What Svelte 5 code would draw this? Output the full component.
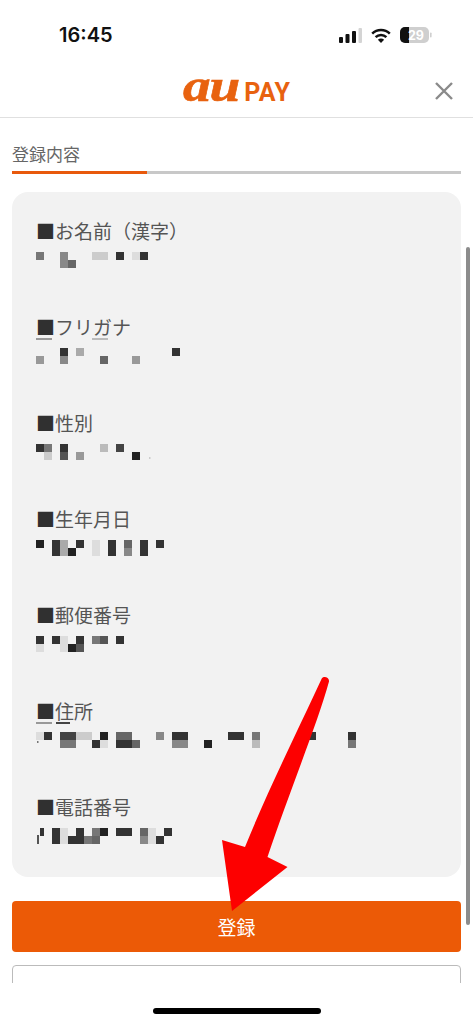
<script>
  // each block: [column, row, shade] on the 8px mosaic grid
  // each smudge: [x, width, shade, y, height], for what the mosaic leaves at its edges
  const fields = [
    { label: 'お名前（漢字）', blocks: [[0,0,'#777'],[3,0,'#888'],[3,1,'#888'],[4,1,'#666'],[7,0,'#ccc'],[8,0,'#ccc'],[10,0,'#333'],[12,0,'#ddd'],[13,0,'#333']] },
    { label: 'フリガナ', smudges: [[0,16,'#999',-10,2],[56,16,'#bbb',-10,2]], blocks: [[3,0,'#333'],[5,0,'#aaa'],[17,0,'#333'],[0,1,'#999'],[3,1,'#888'],[8,1,'#666'],[12,1,'#999']] },
    { label: '性別', smudges: [[113,1.5,'#ccc',13,2]], blocks: [[0,0,'#333'],[1,0,'#777'],[3,0,'#333'],[8,0,'#bbb'],[10,0,'#444'],[1,1,'#ccc'],[3,1,'#555'],[5,1,'#999'],[12,1,'#222']] },
    { label: '生年月日', blocks: [[0,0,'#222'],[2,0,'#333'],[3,0,'#aaa'],[5,0,'#333'],[7,0,'#ddd'],[9,0,'#333'],[11,0,'#666'],[13,0,'#333'],[15,0,'#333'],[2,1,'#333'],[3,1,'#aaa'],[4,1,'#222'],[7,1,'#ddd'],[9,1,'#333'],[11,1,'#888'],[13,1,'#333']] },
    { label: '郵便番号', blocks: [[0,0,'#333'],[2,0,'#333'],[3,0,'#ddd'],[5,0,'#333'],[7,0,'#777'],[8,0,'#555'],[10,0,'#333'],[0,1,'#ddd'],[3,1,'#ddd'],[4,1,'#222'],[5,1,'#555']] },
    { label: '住所', smudges: [[0,16,'#999',-10,2],[20,14,'#444',-10,2],[1,1.5,'#777',9,2]], blocks: [[0,0,'#ddd'],[1,0,'#333'],[3,0,'#444'],[4,0,'#444'],[5,0,'#ccc'],[6,0,'#ccc'],[8,0,'#222'],[10,0,'#666'],[11,0,'#666'],[15,0,'#888'],[17,0,'#333'],[18,0,'#333'],[24,0,'#333'],[25,0,'#333'],[27,0,'#777'],[34,0,'#333'],[39,0,'#333'],[3,1,'#777'],[4,1,'#777'],[7,1,'#333'],[8,1,'#ddd'],[10,1,'#333'],[11,1,'#333'],[12,1,'#666'],[17,1,'#888'],[18,1,'#888'],[21,1,'#222'],[27,1,'#bbb'],[39,1,'#777']] },
    { label: '電話番号', smudges: [[4,4,'#333',0,8],[1,2,'#555',7,9]], blocks: [[2,0,'#333'],[3,0,'#ddd'],[5,0,'#333'],[7,0,'#777'],[8,0,'#222'],[10,0,'#333'],[11,0,'#333'],[13,0,'#666'],[14,0,'#ddd'],[16,0,'#333'],[2,1,'#333'],[3,1,'#ddd'],[4,1,'#333'],[5,1,'#333'],[6,1,'#777'],[7,1,'#666'],[13,1,'#888'],[14,1,'#ddd'],[15,1,'#333']] },
  ];
</script>

<div class="screen">
  <div class="status">
    <span class="status__time">16:45</span>
    <div class="status__icons">
      <svg width="23" height="15" viewBox="0 0 23 15" aria-hidden="true">
        <rect x="0" y="9" width="4" height="6" rx="1" fill="#111" />
        <rect x="6.500" y="6" width="4" height="9" rx="1" fill="#111" />
        <rect x="13" y="3" width="4" height="12" rx="1" fill="#111" />
        <rect x="19.500" y="0" width="3.500" height="15" rx="1" fill="#d4d4d4" />
      </svg>
      <svg width="20" height="15" viewBox="0 0 20 15" aria-hidden="true">
        <path d="M1.200 5.600a12.600 12.600 0 0 1 17.600 0M4.600 9.100a7.800 7.800 0 0 1 10.800 0" fill="none" stroke="#111" stroke-width="2.500" />
        <path d="M10 15 6.900 11.800a4.400 4.400 0 0 1 6.200 0z" fill="#111" />
      </svg>
      <svg width="32" height="16" viewBox="0 0 32 16" aria-hidden="true">
        <rect x="0" y="0" width="29" height="16" rx="5" fill="#cfcfcf" />
        <path d="M5 0h4v16H5a5 5 0 0 1-5-5V5a5 5 0 0 1 5-5z" fill="#111" />
        <rect x="30" y="5.500" width="1.600" height="5" rx="0.800" fill="#cfcfcf" />
        <text class="status__level" x="16" y="12.600" text-anchor="middle">29</text>
      </svg>
    </div>
  </div>

  <header class="header">
    <div class="logo">
      <span class="logo__au">au</span>
      <span class="logo__pay">PAY</span>
    </div>
    <svg class="header__close" width="18" height="18" viewBox="0 0 18 18" aria-hidden="true">
      <path d="M1 1l16 16M17 1 1 17" stroke="#8a8a8a" stroke-width="2.400" fill="none" />
    </svg>
  </header>

  <main class="main">
    <div class="steps">
      <div class="steps__title">登録内容</div>
      <div class="steps__track"><div class="steps__fill"></div></div>
    </div>

    <section class="card">
      {#each fields as field}
        <div class="field">
          <div class="field__label"><span class="field__mark">■</span>{field.label}</div>
          <svg class="field__value" width="340" height="16" aria-hidden="true">
            {#each field.smudges ?? [] as s}
              <rect x={s[0]} y={s[3]} width={s[1]} height={s[4]} fill={s[2]} />
            {/each}
            {#each field.blocks as b}
              <rect x={b[0] * 8} y={b[1] * 8} width="8" height="8" fill={b[2]} />
            {/each}
          </svg>
        </div>
      {/each}
    </section>

    <button class="btn btn--primary">登録</button>
    <button class="btn btn--outline"></button>
  </main>

  <div class="home"><div class="home__bar"></div></div>

  <div class="scrollbar"></div>

  <svg class="arrow" width="120" height="245" viewBox="215 670 120 245" aria-hidden="true">
    <path d="M321.500 679c1.500-3.500 8-2 7.500 2.500C317 725 290 790 267.500 857L287.500 867 232 911 222 840 245 847C268 790 298 730 321.500 679z" fill="#fd0000" />
  </svg>
</div>

<style>
  :global(body) {
    margin: 0;
    background: #fff;
    font-family: "Noto Sans CJK JP", "Noto Sans", sans-serif;
  }

  .screen {
    position: relative;
    display: flex;
    flex-direction: column;
    width: 473px;
    height: 1024px;
    overflow: hidden;
    background: #fff;
  }

  .status {
    display: flex;
    align-items: center;
    justify-content: space-between;
    height: 70px;
    padding: 0 41px 0 59px;
    box-sizing: border-box;
  }

  .status__time {
    font-family: Inter, sans-serif;
    font-size: 20px;
    font-weight: 600;
    color: #111;
  }

  .status__icons {
    display: flex;
    align-items: center;
    gap: 9px;
  }

  .status__level {
    font-family: Inter, sans-serif;
    font-size: 12.500px;
    font-weight: 700;
    fill: #fff;
  }

  .header {
    position: relative;
    display: flex;
    align-items: center;
    justify-content: center;
    height: 48px;
    box-sizing: border-box;
    border-bottom: 1px solid #e0e0e0;
  }

  .header__close {
    position: absolute;
    right: 20px;
    top: 12px;
  }

  .logo {
    display: flex;
    align-items: baseline;
    gap: 6px;
    margin-top: -9px;
    color: #e8620f;
  }

  .logo__au {
    font-family: "Liberation Serif", serif;
    font-size: 46px;
    font-style: italic;
    font-weight: 700;
    line-height: 40px;
    letter-spacing: -1px;
    -webkit-text-stroke: 0.6px #e8620f;
    transform: scaleX(1.2);
    transform-origin: left;
    margin-right: 9px;
  }

  .logo__pay {
    font-family: Roboto, sans-serif;
    font-size: 25px;
    font-weight: 700;
    line-height: 40px;
    letter-spacing: 0.5px;
  }

  .main {
    flex: 1;
    min-height: 0;
    padding: 0 12px;
    overflow: hidden;
  }

  .steps {
    padding-top: 24px;
  }

  .steps__title {
    font-size: 17px;
    line-height: 24px;
    color: #666;
  }

  .steps__track {
    height: 3px;
    margin-top: 5px;
    background: #c8c8c8;
  }

  .steps__fill {
    width: 135px;
    height: 100%;
    background: #e8590c;
  }

  .card {
    display: flex;
    flex-direction: column;
    gap: 47px;
    height: 685px;
    margin-top: 18px;
    padding: 27px 24px 0;
    box-sizing: border-box;
    border-radius: 16px;
    background: #f2f2f2;
  }

  .field__label {
    font-size: 19px;
    line-height: 24px;
    color: #555;
  }

  .field__mark {
    color: #303030;
  }

  .field__value {
    display: block;
    margin-top: 9px;
    overflow: visible;
    filter: blur(0.4px);
  }

  .btn {
    display: block;
    width: 100%;
    border-radius: 4px;
    box-sizing: border-box;
    font: inherit;
  }

  .btn--primary {
    height: 51px;
    margin-top: 24px;
    border: 0;
    background: #ec5a06;
    color: #fff;
    font-size: 19px;
  }

  .btn--outline {
    height: 51px;
    margin-top: 13px;
    border: 1.500px solid #bbb;
    background: #fff;
  }

  .home {
    height: 41px;
    padding-top: 25px;
    box-sizing: border-box;
  }

  .home__bar {
    width: 168px;
    height: 6px;
    margin: 0 auto;
    border-radius: 3px;
    background: #000;
  }

  .scrollbar {
    position: absolute;
    left: 466px;
    top: 247px;
    width: 4px;
    height: 678px;
    border-radius: 2px;
    background: #8c8c8c;
  }

  .arrow {
    position: absolute;
    left: 215px;
    top: 670px;
  }
</style>
